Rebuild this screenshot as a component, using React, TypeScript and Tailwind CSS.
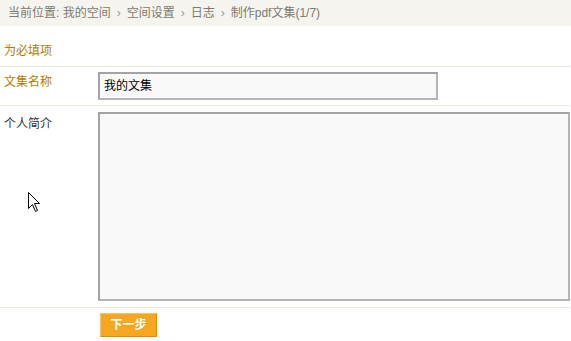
export default function App() {
  return (
    <div
      className="relative w-[571px] h-[341px] overflow-hidden bg-white text-[12px] leading-none"
      style={{ fontFamily: '"Liberation Sans", "Noto Sans CJK SC", sans-serif' }}
    >
      <div className="h-[26px] bg-[#f5f4ef] pl-[8px] flex items-center text-[#7d7a6e]">
        当前位置: 我的空间<span className="mx-[6px] text-[#999]">›</span>空间设置
        <span className="mx-[6px] text-[#999]">›</span>日志
        <span className="mx-[6px] text-[#999]">›</span>制作pdf文集(1/7)
      </div>

      <div className="pl-[4px] pt-[19px] h-[40px] text-[#b07c00]">为必填项</div>

      <div className="border-t border-[#ece9dc] w-[570px]" />

      <div className="flex h-[38px] items-start">
        <div className="w-[98px] pl-[4px] pt-[9px] text-[#b07c00]">文集名称</div>
        <div className="pt-[5px]">
          <div className="w-[340px] h-[28px] border-2 border-[#a3a3a3] border-b-[#b5b5b5] border-r-[#b5b5b5] bg-[#f9f9f9] flex items-center pl-[4px] text-black">
            我的文集
          </div>
        </div>
      </div>

      <div className="border-t border-[#ece9dc] w-[570px]" />

      <div className="flex h-[201px] items-start">
        <div className="w-[98px] pl-[4px] pt-[12px] text-[#333]">个人简介</div>
        <div className="pt-[6px]">
          <div className="w-[472px] h-[189px] border-2 border-[#a3a3a3] border-b-[#b5b5b5] border-r-[#b5b5b5] bg-[#f9f9f9]" />
        </div>
      </div>

      <div className="border-t border-[#ece9dc] w-[570px]" />

      <div className="pl-[100px] pt-[5px]">
        <button className="w-[57px] h-[24px] bg-[#f5a722] border border-[#f8c46a] border-b-[#d98f10] border-r-[#d98f10] text-white font-bold text-[12px] flex items-center justify-center">
          下一步
        </button>
      </div>

      <svg
        className="absolute left-[28px] top-[192px]"
        width="13"
        height="21"
        viewBox="0 0 13 21"
      >
        <path
          d="M0.5 0.5 L0.5 16.5 L4.5 12.5 L7.5 19.5 L9.5 18.5 L6.5 11.5 L11.5 11.5 Z"
          fill="white"
          stroke="black"
          strokeWidth="1"
        />
      </svg>
    </div>
  )
}
